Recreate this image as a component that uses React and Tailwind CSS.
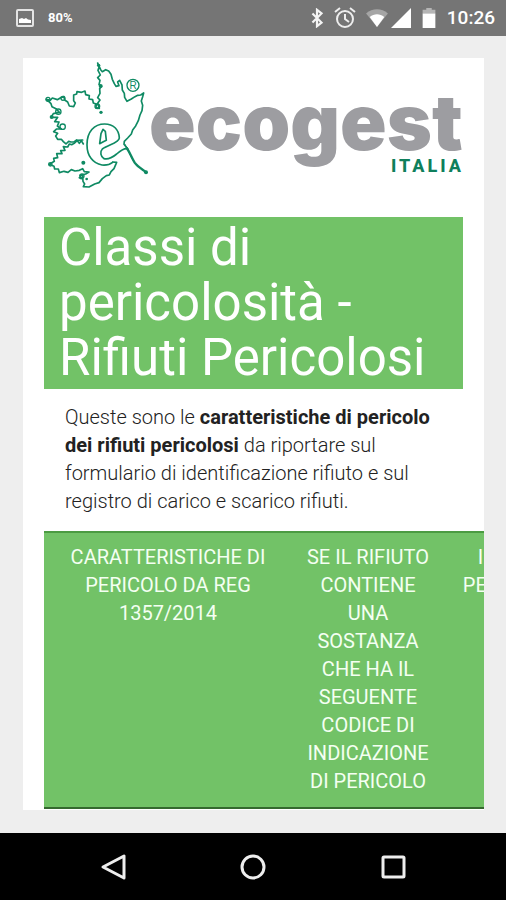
function EcogestLogo() {
  return (
    <svg viewBox="0 0 419 132" className="w-full" role="img" aria-label="Ecogest Italia">
      {/* Leaf */}
      <g
        transform="translate(-24 -6) scale(0.3333)"
        fill="none"
        stroke="#0f8a63"
        strokeWidth="5"
        strokeLinejoin="round"
        strokeLinecap="round"
      >
        <path d="M190 264 L184 254 L178 262 L170 252 L162 258 L153 258 L146 256 L138 264 L130 257 L124 250 L113 250 L107 240 L113 232 L101 227 L110 219 L124 219 L112 210 L117 198 L104 197 L113 184 L93 184 L100 173 L118 169 L108 158 L96 152 L93 143 L86 136 L79 130 L91 133 L97 126 L112 131 L122 125 L132 122 L134 132 L143 138 L148 150 L161 152 L166 141 L161 134 L161 117 L170 114 L171 107 L185 109 L195 105 L197 116 L208 119 L207 129 L218 131 L220 141 L230 145 L227 155 L238 157 L233 142 L240 132 L233 125 L240 112 L239 98 L245 91 L237 86 L240 73 L233 65 L241 57 L234 43 L237 34 L233 21 L242 41 L247 47 L257 41 L266 45 L273 55 L277 70 L283 83 L288 91 L297 89 L293 78 L299 73 L306 87 L307 102 L313 112 L314 124 L321 136 L334 129 L345 122 L353 118 L362 117 L371 111 L368 122 L364 135 L368 148 L366 164 L360 177 L355 194 L347 210 L338 222 L334 234 L323 246 L313 256 L312 265 L324 280" />
        <path d="M188 252 L172 253 L164 261 L155 266 L148 264 L143 273 L130 272 L135 283 L122 284 L126 293 L110 293 L113 305 L101 307 L103 316 L88 325 L102 331 L104 339 L115 339 L118 350 L132 346 L144 349 L154 341 L165 345 L178 343 L188 338 L193 347 L207 348 L197 354 L180 358 L184 368 L178 365 M188 360 L189 376 L194 384 L190 392 L207 393 L224 384 L237 380 L247 368 L259 359 L268 357 L273 347 L282 338 L290 319 L278 318" />
        <path d="M278 319 C268 327 257 328 246 327 C218 322 201 299 201 266 C201 228 222 204 254 204 C280 204 297 220 298 246 C298 260 263 267 247 279 C239 287 242 303 252 308 C266 312 278 304 290 294 C302 283 310 277 322 278" />
        <path d="M239 263 L243 233 L249 220 L256 226 L259 253 L250 257 Z" />
        <path d="M320 276 C331 291 334 304 344 320 C354 334 369 341 379 349" strokeWidth="7" />
        <path d="M315 265 C327 283 330 301 341 316" strokeWidth="3" />
        <g fill="#0f8a63" stroke="none">
          <circle cx="242" cy="90" r="6" />
          <circle cx="243" cy="169" r="5" />
          <circle cx="190" cy="320" r="6" />
          <circle cx="200" cy="369" r="4" />
          <circle cx="378" cy="349" r="6" />
          <circle cx="236" cy="28" r="5" />
        </g>
        <g strokeWidth="4">
          <circle cx="84" cy="130" r="6" />
          <circle cx="129" cy="127" r="6" />
          <circle cx="115" cy="167" r="8" />
          <circle cx="128" cy="212" r="8" />
          <circle cx="232" cy="151" r="7" />
          <circle cx="91" cy="325" r="5" />
          <circle cx="95" cy="183" r="4" />
          <circle cx="186" cy="360" r="6" />
          <circle cx="339" cy="88" r="18" />
        </g>
      </g>
      <text x="89" y="27" textAnchor="middle" className="fill-[#0f8a63] font-['Liberation_Sans',sans-serif] text-[10px]">
        R
      </text>

      {/* Wordmark */}
      <text x="105" y="88" className="fill-[#9d9da1] font-['Inter',sans-serif] text-[77px] font-black">
        ecogest
      </text>
      <text x="347" y="110" className="fill-[#0f7f5c] font-['Roboto',sans-serif] text-[18px] font-extrabold tracking-[3px]">
        ITALIA
      </text>
    </svg>
  )
}

function StatusBar() {
  return (
    <header className="flex h-9 items-center justify-between bg-[#757575] pr-[11px] pl-4 text-white">
      <div className="flex items-center gap-3">
        <svg viewBox="0 0 20 20" className="size-5">
          <rect x="1" y="2" width="16" height="16" rx="1" fill="none" stroke="#e4e4e4" strokeWidth="2" />
          <path d="M3 15v-4l3-1 2 1 2-1 2 1.5 3 .5v3z" fill="#fff" />
        </svg>
        <span className="text-[13px] font-bold">80%</span>
      </div>
      <div className="flex items-center gap-0.5">
        <svg viewBox="0 0 14 22" className="h-5 w-4" fill="none" stroke="#f4f4f4" strokeWidth="2.4">
          <path d="M2 6l10 10-5 4V2l5 4L2 16" />
        </svg>
        <svg viewBox="0 0 24 24" className="ml-1.5 size-6" fill="none" stroke="#eee" strokeWidth="2">
          <circle cx="12" cy="13" r="8" />
          <path d="M12 8v5l4 3M2 6l5-4M22 6l-5-4" />
        </svg>
        <svg viewBox="0 0 26 22" className="ml-1.5 h-5 w-6">
          <path d="M1 6C8 0 18 0 25 6L13 21z" fill="#a5a5a5" />
          <path d="M5 10c5-4 11-4 16 0l-8 11z" fill="#fff" />
        </svg>
        <svg viewBox="0 0 20 20" className="size-5">
          <path d="M20 0v20H0z" fill="#fff" />
        </svg>
        <svg viewBox="0 0 16 22" className="ml-2 h-5 w-4">
          <path d="M1 2h4V0h6v2h4v4H1z" fill="#b5b5b5" />
          <path d="M1 6h14v16H1z" fill="#fff" />
        </svg>
        <span className="ml-2 text-[19px] font-medium">10:26</span>
      </div>
    </header>
  )
}

function NavBar() {
  return (
    <nav className="flex h-[67px] items-center justify-center gap-[92px] bg-black">
      <button aria-label="Indietro" className="flex size-12 items-center justify-center">
        <svg viewBox="0 0 28 28" className="size-7" fill="none" stroke="#eee" strokeWidth="3" strokeLinejoin="round">
          <path d="M25 3v22L4 14z" />
        </svg>
      </button>
      <button aria-label="Home" className="flex size-12 items-center justify-center">
        <svg viewBox="0 0 28 28" className="size-7" fill="none" stroke="#eee" strokeWidth="3">
          <circle cx="14" cy="14" r="11" />
        </svg>
      </button>
      <button aria-label="Recenti" className="flex size-12 items-center justify-center">
        <svg viewBox="0 0 28 28" className="size-7" fill="none" stroke="#eee" strokeWidth="3" strokeLinejoin="round">
          <rect x="4" y="4" width="21" height="20" rx="1" />
        </svg>
      </button>
    </nav>
  )
}

export default function App() {
  return (
    <div className="flex min-h-screen flex-col bg-[#eee] font-['Roboto',sans-serif]">
      <StatusBar />

      <main className="mt-[22px] mr-[22px] mb-[23px] ml-[23px] flex-1 overflow-hidden bg-white pl-[21px]">
        <div className="pr-[21px]">
          <div className="pt-1">
            <EcogestLogo />
          </div>
          <h1 className="mt-[23px] bg-[#72c267] px-[15px] pt-[3px] pb-1 text-[51px] leading-[55px] text-white">
            Classi di pericolosità - Rifiuti Pericolosi
          </h1>
          <p className="px-[21px] pt-[14px] pb-4 text-[20px] leading-7 font-light text-[#222]">
            Queste sono le <strong className="font-bold">caratteristiche di pericolo dei rifiuti pericolosi</strong> da
            riportare sul formulario di identificazione rifiuto e sul registro di carico e scarico rifiuti.
          </p>
        </div>

        {/* Wider than the card, the last column runs out of view */}
        <table className="w-[530px] table-fixed border-y-2 border-t-[#4b9b42] border-b-[#35692f] bg-[#72c267] text-[20px] leading-7 text-[#f4fff2]">
          <thead>
            <tr className="align-top">
              <th className="w-[248px] px-3 pt-[10px] pb-3 font-normal">CARATTERISTICHE DI PERICOLO DA REG 1357/2014</th>
              <th className="w-[152px] px-3 pt-[10px] pb-3 font-normal">
                SE IL RIFIUTO CONTIENE UNA SOSTANZA CHE HA IL SEGUENTE CODICE DI INDICAZIONE DI PERICOLO
              </th>
              <th className="px-3 pt-[10px] pb-3 font-normal">INDICE PERICOLO</th>
            </tr>
          </thead>
        </table>
      </main>

      <NavBar />
    </div>
  )
}
